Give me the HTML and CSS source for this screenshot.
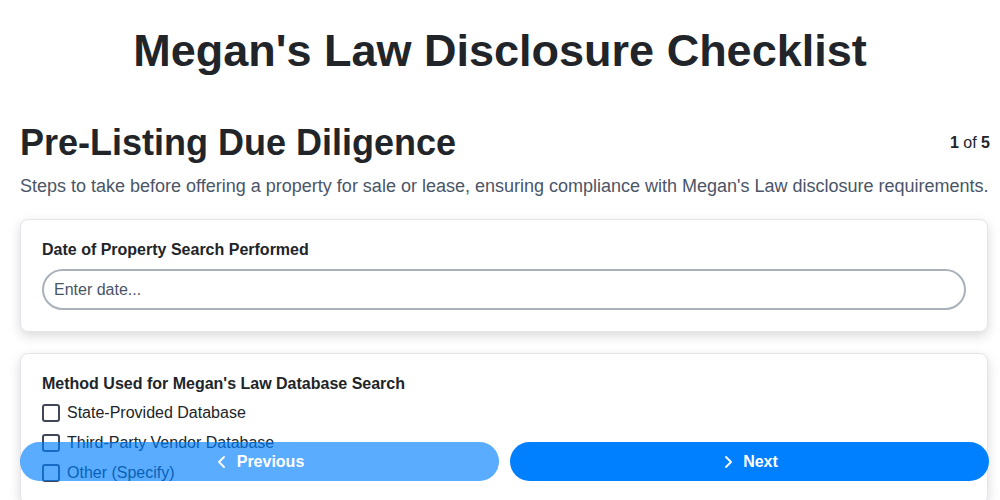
FILE: index.html
```html
<!DOCTYPE html>
<html>
<head>
<meta charset="utf-8">
<link rel="stylesheet" href="styles.css">
</head>
<body>
<div class="page">
  <h1 class="title">Megan's Law Disclosure Checklist</h1>
  <div class="section-head">
    <h2 class="section-title">Pre-Listing Due Diligence</h2>
    <div class="step"><b>1</b> of <b>5</b></div>
  </div>
  <p class="section-desc">Steps to take before offering a property for sale or lease, ensuring compliance with Megan's Law disclosure requirements.</p>
  <div class="card">
    <label class="field-label">Date of Property Search Performed</label>
    <input class="text-input" type="text" placeholder="Enter date...">
  </div>
  <div class="card">
    <label class="field-label">Method Used for Megan's Law Database Search</label>
    <div class="options">
      <label class="option"><span class="box"></span>State-Provided Database</label>
      <label class="option"><span class="box"></span>Third-Party Vendor Database</label>
      <label class="option"><span class="box"></span>Other (Specify)</label>
    </div>
  </div>
</div>
<div class="nav">
  <button class="btn btn-prev"><svg width="14" height="14" viewBox="0 0 14 14"><path d="M9 2 L4 7 L9 12" fill="none" stroke="#fff" stroke-width="1.8" stroke-linecap="round" stroke-linejoin="round"/></svg>Previous</button>
  <button class="btn btn-next"><svg width="14" height="14" viewBox="0 0 14 14"><path d="M5 2 L10 7 L5 12" fill="none" stroke="#fff" stroke-width="1.8" stroke-linecap="round" stroke-linejoin="round"/></svg>Next</button>
</div>
</body>
</html>
```
FILE: styles.css
```css
html, body {
  margin: 0;
  padding: 0;
  background: #fff;
  font-family: "Liberation Sans", Arial, sans-serif;
  color: #212529;
}
.page {
  padding: 0 10px 0 20px;
}
.title {
  font-family: "Liberation Sans", Arial, sans-serif;
  font-size: 45px;
  font-weight: bold;
  text-align: center;
  margin: 0 10px 0 0;
  padding-top: 23px;
  line-height: 56px;
  color: #212529;
}
.section-head {
  display: flex;
  justify-content: space-between;
  align-items: center;
  margin-top: 43px;
}
.section-title {
  margin: 0;
  font-size: 36px;
  line-height: 42px;
  font-weight: bold;
}
.step {
  font-size: 16px;
  color: #212529;
}
.section-desc {
  margin: 10px 0 0;
  font-size: 18px;
  line-height: 24px;
  color: #4a5568;
}
.card {
  margin: 21px 2px 0 0;
  border: 1px solid #e4e4ea;
  border-radius: 8px;
  box-shadow: 0 4px 12px rgba(0,0,0,0.15);
  padding: 21px 21px 21px;
  background: #fff;
}
.field-label {
  display: block;
  font-weight: bold;
  font-size: 16px;
  line-height: 18px;
  margin-bottom: 10px;
  color: #212529;
}
.text-input {
  display: block;
  box-sizing: border-box;
  width: 100%;
  height: 41px;
  border: 2px solid #a9b1bb;
  border-radius: 21px;
  padding: 0 10px;
  font-family: "Liberation Sans", Arial, sans-serif;
  font-size: 16px;
  color: #212529;
  outline: none;
}
.text-input::placeholder {
  color: #4a5568;
}
.options {
  display: flex;
  flex-direction: column;
  gap: 12px;
  margin-top: 11px;
}
.option {
  display: flex;
  align-items: center;
  gap: 7px;
  font-size: 16px;
  line-height: 18px;
  color: #212529;
}
.box {
  box-sizing: border-box;
  width: 18px;
  height: 18px;
  border: 2px solid #3f4656;
  border-radius: 3px;
}
.nav {
  position: fixed;
  left: 20px;
  right: 11px;
  bottom: 19px;
  display: flex;
  gap: 11px;
}
.btn {
  flex: 1;
  height: 39px;
  border: none;
  border-radius: 20px;
  display: flex;
  align-items: center;
  justify-content: center;
  gap: 8px;
  font-family: "Liberation Sans", Arial, sans-serif;
  font-size: 16px;
  font-weight: bold;
  color: #fff;
  background: #0080ff;
}
.btn-prev {
  opacity: 0.65;
}
```
